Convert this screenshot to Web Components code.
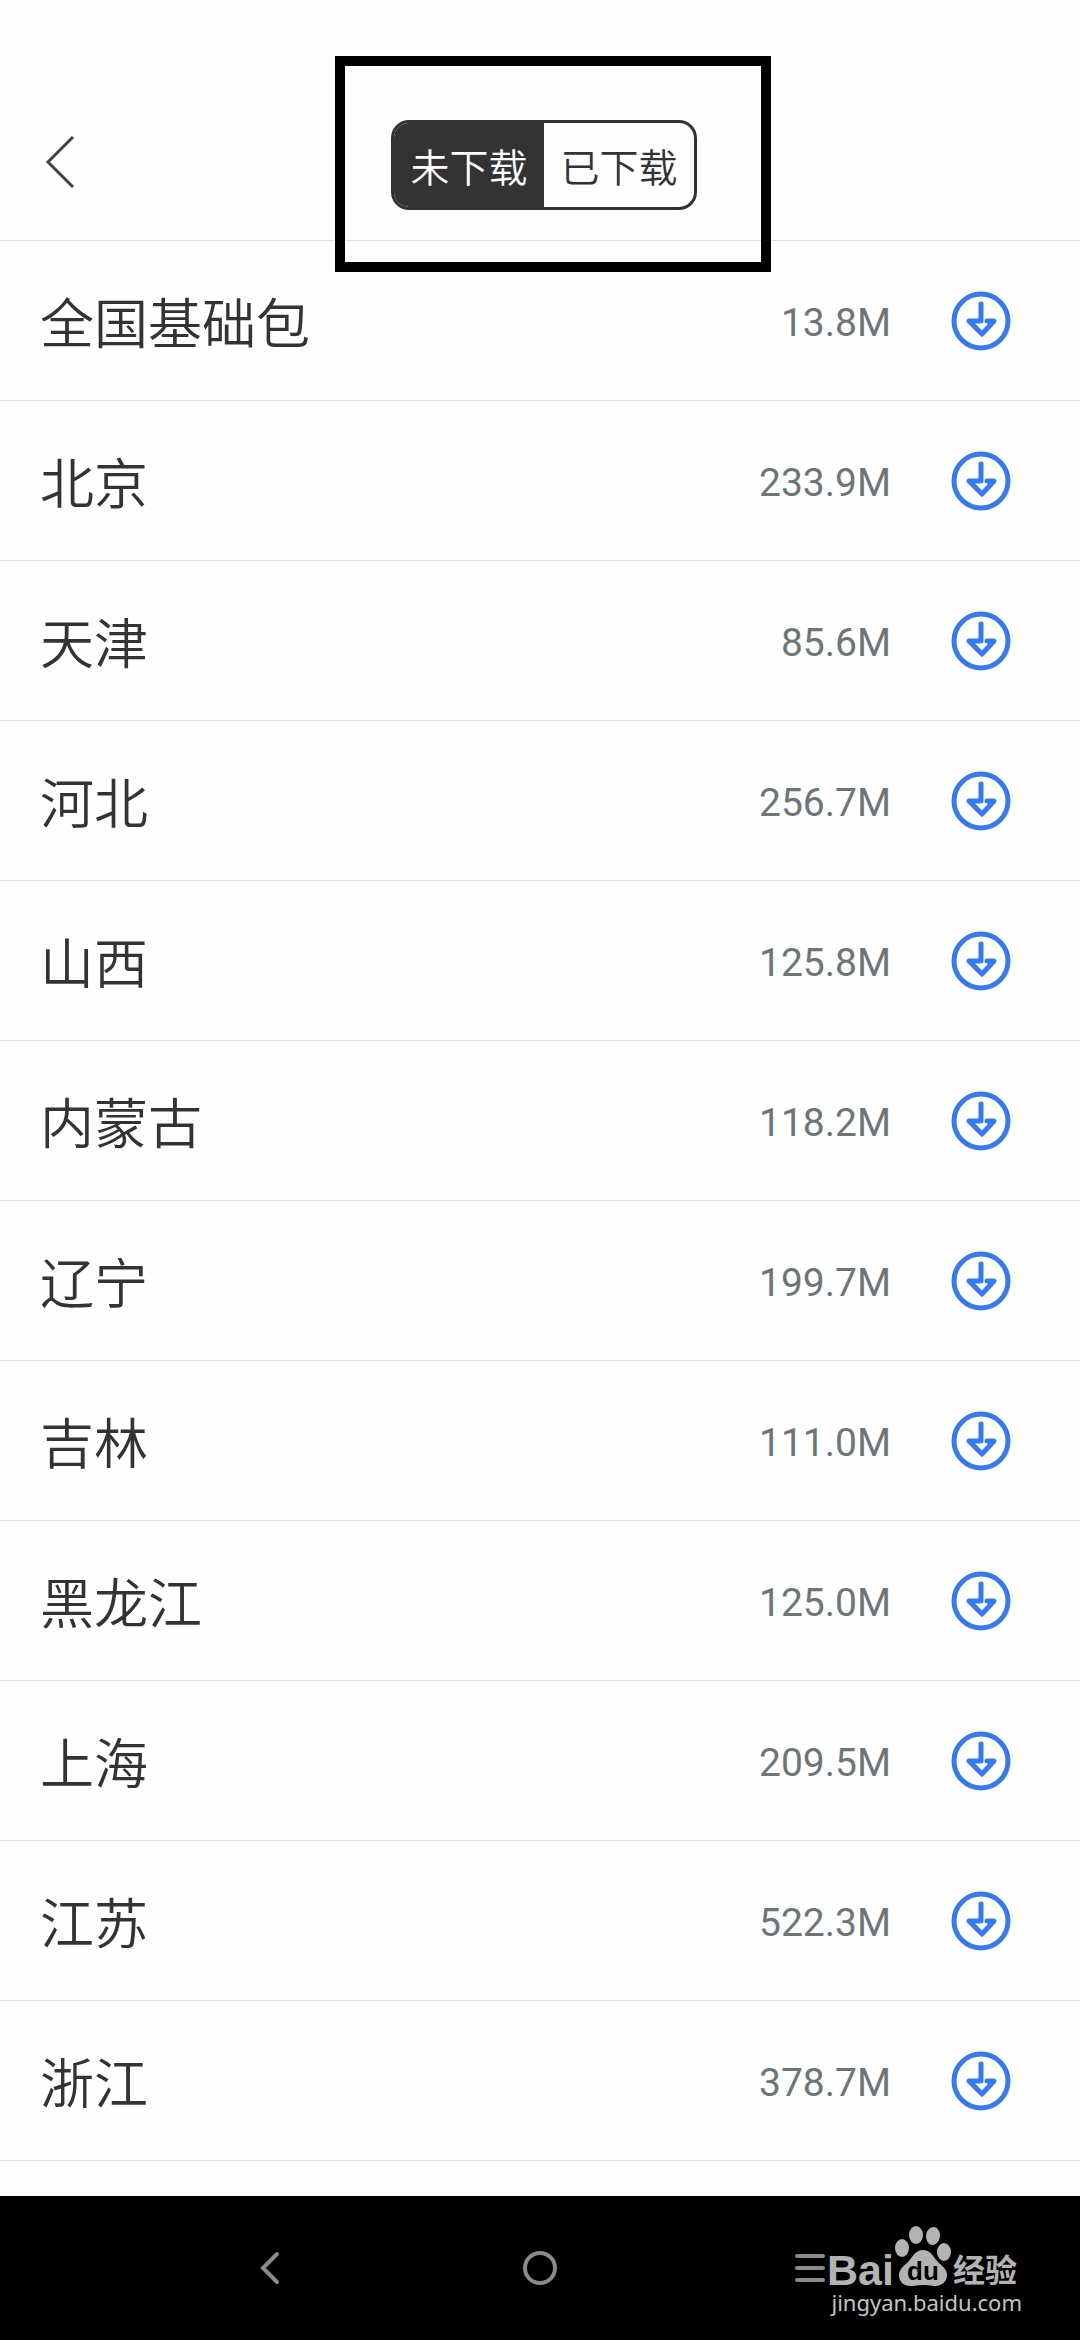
<!DOCTYPE html>
<html lang="zh-CN">

<head>
  <meta charset="UTF-8">
  <meta name="viewport" content="width=device-width, initial-scale=1.0">
  <title>离线地图下载</title>
  <style>
    body {
      margin: 0;
      min-height: 100vh;
      display: flex;
      flex-direction: column;
      background-color: #fefefe;
      color: #333;
      font-family: Roboto, "Noto Sans CJK SC", sans-serif;
    }

    main {
      flex: 1;
    }
  </style>
</head>

<body>
  <download-header>
    <download-tabs>
      <span slot="pending">未下载</span>
      <span slot="done">已下载</span>
    </download-tabs>
  </download-header>

  <main>
    <region-row>全国基础包<span slot="size">13.8M</span></region-row>
    <region-row>北京<span slot="size">233.9M</span></region-row>
    <region-row>天津<span slot="size">85.6M</span></region-row>
    <region-row>河北<span slot="size">256.7M</span></region-row>
    <region-row>山西<span slot="size">125.8M</span></region-row>
    <region-row>内蒙古<span slot="size">118.2M</span></region-row>
    <region-row>辽宁<span slot="size">199.7M</span></region-row>
    <region-row>吉林<span slot="size">111.0M</span></region-row>
    <region-row>黑龙江<span slot="size">125.0M</span></region-row>
    <region-row>上海<span slot="size">209.5M</span></region-row>
    <region-row>江苏<span slot="size">522.3M</span></region-row>
    <region-row>浙江<span slot="size">378.7M</span></region-row>
  </main>

  <system-nav>
    <site-watermark></site-watermark>
  </system-nav>

  <script>
    // Header
    const headerTemplate = document.createElement("template");
    headerTemplate.innerHTML = `
      <style>
        :host {
          display: block;
          border-bottom: 1px solid #dcdcdc;
        }

        header {
          display: grid;
          grid-template-columns: 1fr auto 1fr;
          align-items: center;
          padding: 120px 0 30px 8px;
        }

        .back {
          justify-self: start;
          display: flex;
          padding: 12px 32px;
          margin: 0 0 6px;
          border: 0;
          background: none;
          cursor: pointer;
        }
      </style>
      <header>
        <button class="back" aria-label="返回">
          <svg width="40" height="60" viewBox="0 0 40 60" fill="none" stroke="#444" stroke-width="3">
            <path d="M33 5 L8 30 L33 55" />
          </svg>
        </button>
        <slot></slot>
      </header>
    `;

    class DownloadHeader extends HTMLElement {
      constructor() {
        super();
        this.attachShadow({ mode: "open" });
        this.shadowRoot.append(headerTemplate.content.cloneNode(true));
      }
    }

    window.customElements.define("download-header", DownloadHeader);

    // Tabs, with the black marker frame drawn over them
    const tabsTemplate = document.createElement("template");
    tabsTemplate.innerHTML = `
      <style>
        :host {
          display: block;
          position: relative;
        }

        .tabs {
          display: flex;
          border: 3px solid #333;
          border-radius: 18px;
          overflow: hidden;
        }

        button {
          width: 150px;
          height: 84px;
          padding: 0;
          border: 0;
          background: none;
          color: #333;
          font-family: inherit;
          font-size: 39px;
          font-weight: 350;
          cursor: pointer;
        }

        button[aria-pressed="true"] {
          background-color: #333;
          color: #fff;
        }

        .marker {
          position: absolute;
          top: -64px;
          right: -74px;
          bottom: -62px;
          left: -56px;
          border: 10px solid #000;
          pointer-events: none;
        }
      </style>
      <div class="tabs">
        <button aria-pressed="true"><slot name="pending"></slot></button>
        <button aria-pressed="false"><slot name="done"></slot></button>
      </div>
      <div class="marker"></div>
    `;

    class DownloadTabs extends HTMLElement {
      constructor() {
        super();
        this.attachShadow({ mode: "open" });
        this.shadowRoot.append(tabsTemplate.content.cloneNode(true));
        const buttons = this.shadowRoot.querySelectorAll("button");
        buttons.forEach((button) => {
          button.addEventListener("click", () => {
            buttons.forEach((b) => b.setAttribute("aria-pressed", b === button));
          });
        });
      }
    }

    window.customElements.define("download-tabs", DownloadTabs);

    // One region of the list
    const rowTemplate = document.createElement("template");
    rowTemplate.innerHTML = `
      <style>
        :host {
          display: flex;
          align-items: center;
          height: 159px;
          padding: 0 57px 0 40px;
          border-bottom: 1px solid #e0e0e0;
        }

        .name {
          flex: 1;
          font-size: 54px;
          font-weight: 350;
        }

        .size {
          padding-top: 5px;
          margin-right: 48px;
          color: #6b7679;
          font-size: 39px;
        }

        button {
          display: flex;
          padding: 12px;
          border: 0;
          background: none;
          cursor: pointer;
        }
      </style>
      <div class="name"><slot></slot></div>
      <div class="size"><slot name="size"></slot></div>
      <button aria-label="下载">
        <svg width="60" height="60" viewBox="0 0 60 60" fill="none" stroke="#357af0" stroke-width="5"
          stroke-linecap="round" stroke-linejoin="round">
          <circle cx="30" cy="30" r="27" />
          <path d="M30 13 V30 H18 L31 43 L43 30 H36" />
        </svg>
      </button>
    `;

    class RegionRow extends HTMLElement {
      constructor() {
        super();
        this.attachShadow({ mode: "open" });
        this.shadowRoot.append(rowTemplate.content.cloneNode(true));
      }
    }

    window.customElements.define("region-row", RegionRow);

    // System navigation
    const navTemplate = document.createElement("template");
    navTemplate.innerHTML = `
      <style>
        :host {
          display: block;
          position: relative;
          background-color: #000;
        }

        nav {
          display: flex;
          padding: 0 12.5%;
        }

        button {
          flex: 1;
          display: flex;
          align-items: center;
          justify-content: center;
          height: 144px;
          padding: 0;
          border: 0;
          background: none;
          cursor: pointer;
        }
      </style>
      <nav>
        <button aria-label="返回">
          <svg width="36" height="36" viewBox="0 0 36 36" fill="none" stroke="#8a8a8a" stroke-width="4"
            stroke-linecap="round">
            <path d="M25 4 L11 18 L25 32" />
          </svg>
        </button>
        <button aria-label="主页">
          <svg width="36" height="36" viewBox="0 0 36 36" fill="none" stroke="#8a8a8a" stroke-width="4">
            <circle cx="18" cy="18" r="15" />
          </svg>
        </button>
        <button aria-label="菜单">
          <svg width="36" height="36" viewBox="0 0 36 36" fill="none" stroke="#8a8a8a" stroke-width="4"
            stroke-linecap="round">
            <path d="M5 6 H31 M5 18 H31 M5 30 H31" />
          </svg>
        </button>
      </nav>
      <slot></slot>
    `;

    class SystemNav extends HTMLElement {
      constructor() {
        super();
        this.attachShadow({ mode: "open" });
        this.shadowRoot.append(navTemplate.content.cloneNode(true));
      }
    }

    window.customElements.define("system-nav", SystemNav);

    // Watermark
    const watermarkTemplate = document.createElement("template");
    watermarkTemplate.innerHTML = `
      <style>
        :host {
          position: absolute;
          right: 58px;
          bottom: 30px;
          display: flex;
          flex-direction: column;
          align-items: flex-end;
          pointer-events: none;
        }

        svg {
          display: block;
          overflow: visible;
        }

        .site {
          color: #c4c4c4;
          font-family: "Noto Sans", "Open Sans", sans-serif;
          font-size: 22px;
          line-height: 16px;
        }
      </style>
      <svg width="196" height="70" viewBox="-4 0 196 70" fill="#b3b3b3">
        <text x="-3" y="61" font-family="Liberation Sans, sans-serif" font-weight="700" font-size="43">Bai</text>
        <ellipse cx="72" cy="24" rx="7" ry="9" />
        <ellipse cx="86" cy="11" rx="7" ry="9" />
        <ellipse cx="103" cy="12" rx="7" ry="9" transform="rotate(8 103 12)" />
        <ellipse cx="114" cy="28" rx="7" ry="9" />
        <path d="M93 26 C101 26 103 33 109 39 C115 44 117 47 117 51 C117 58 111 62 106 62
          C100 62 98 61 93 61 C88 61 86 62 80 62 C74 62 69 58 69 51 C69 47 72 43 77 39 C83 33 85 26 93 26 Z" />
        <text x="77" y="56" fill="#000" font-family="Liberation Sans, sans-serif" font-weight="700" font-size="26">du</text>
        <text x="123" y="58" font-family="Noto Sans CJK SC, sans-serif" font-weight="700" font-size="32">经验</text>
      </svg>
      <div class="site">jingyan.baidu.com</div>
    `;

    class SiteWatermark extends HTMLElement {
      constructor() {
        super();
        this.attachShadow({ mode: "open" });
        this.shadowRoot.append(watermarkTemplate.content.cloneNode(true));
      }
    }

    window.customElements.define("site-watermark", SiteWatermark);
  </script>
</body>

</html>
